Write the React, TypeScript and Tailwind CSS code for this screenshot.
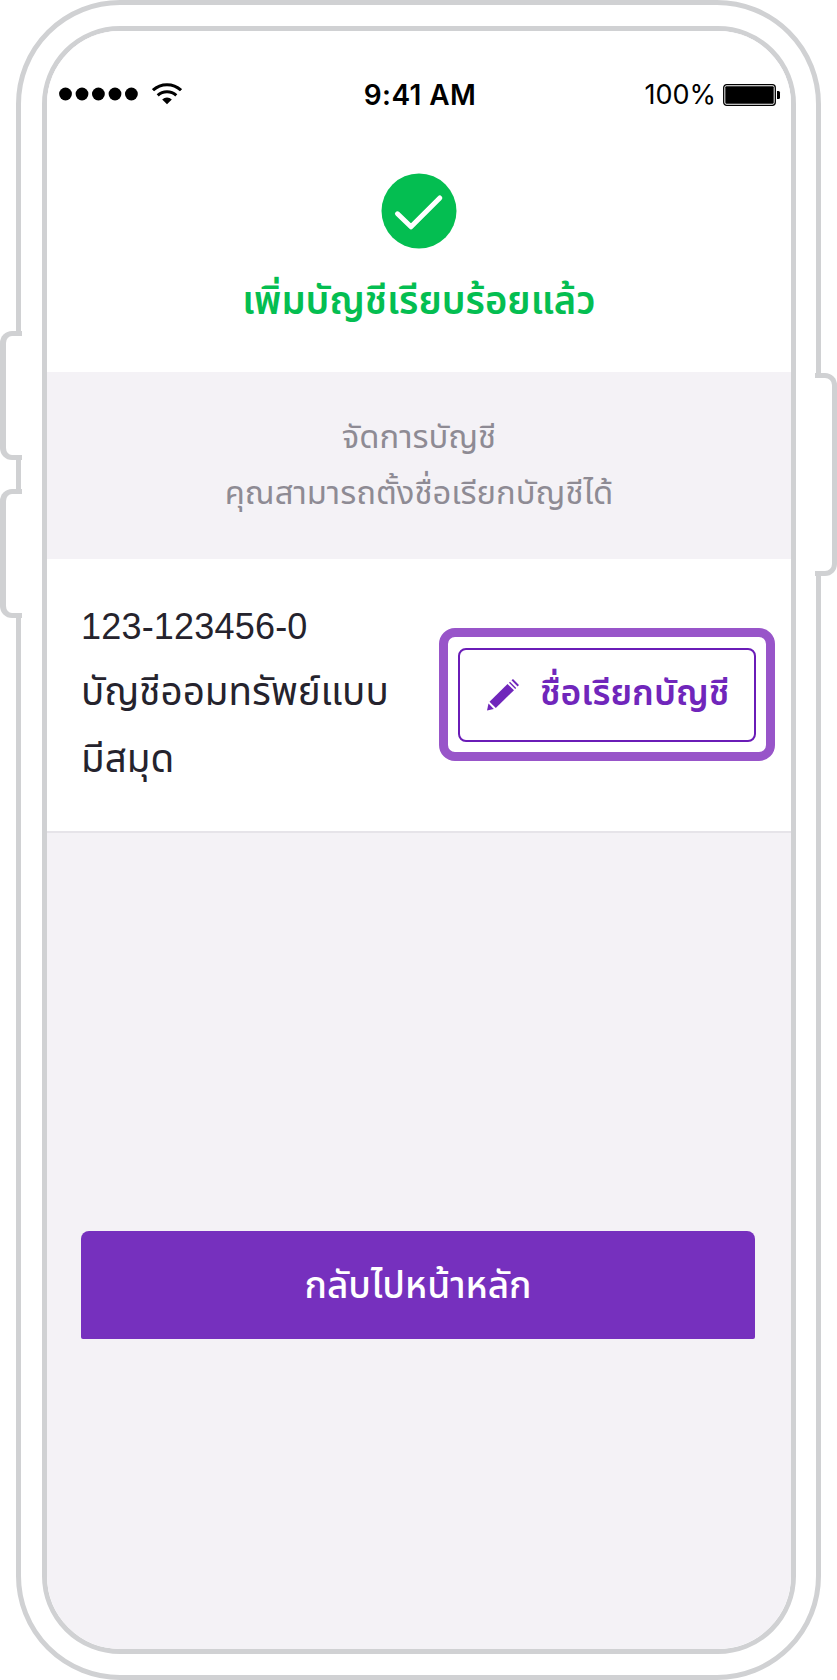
const thai = "font-['Noto_Sans_Thai','Liberation_Sans',sans-serif] whitespace-nowrap";

function StatusBar() {
  return (
    <div className="flex h-[126px] items-center justify-between pl-3 pr-[10px] font-['Inter',sans-serif] text-black">
      <div className="flex w-[260px] items-center gap-[14px]">
        <svg className="h-[14px] w-[79px]" viewBox="0 0 79 14">
          <circle cx="6.5" cy="7" r="6.4" />
          <circle cx="23" cy="7" r="6.4" />
          <circle cx="39.4" cy="7" r="6.4" />
          <circle cx="56" cy="7" r="6.4" />
          <circle cx="72.4" cy="7" r="6.4" />
        </svg>
        <svg className="h-[22px] w-[30px]" viewBox="0 0 30 22" fill="none" stroke="black" strokeWidth="3">
          <path d="M1 7.2a20.5 20.5 0 0 1 28 0" />
          <path d="M5.7 12.4a13.8 13.8 0 0 1 18.6 0" />
          <path d="M10.2 16.4a7 7 0 0 1 9.6 0L15 21.3z" fill="black" stroke="none" />
        </svg>
      </div>
      <div className="pt-[2px] text-[28px] leading-8 font-semibold tracking-[0.4px]">9:41 AM</div>
      <div className="flex w-[260px] items-center justify-end gap-[7px] pt-px">
        <span className="text-[27px] leading-8">100%</span>
        <svg className="h-[22px] w-[58px]" viewBox="0 0 58 22">
          <rect x="0.7" y="0.7" width="51.6" height="20.6" rx="3" fill="none" stroke="black" strokeWidth="1.3" />
          <rect x="2.3" y="2.3" width="48.4" height="17.4" rx="1" />
          <path d="M54 7h1.5a1.5 1.5 0 0 1 1.5 1.5v5a1.5 1.5 0 0 1-1.5 1.5H54z" />
        </svg>
      </div>
    </div>
  );
}

function Screen() {
  return (
    <div className="flex h-full flex-col overflow-hidden rounded-[73px] bg-[#f4f2f6]">
      <div className="h-[341px] bg-white">
        <StatusBar />
        <div className="flex flex-col items-center pt-4">
          <svg className="h-[76px] w-[76px]" viewBox="0 0 76 76">
            <circle cx="38" cy="38" r="37.5" fill="#04be51" />
            <path d="M16.5 40.8 30 53.8 58.8 25" fill="none" stroke="white" strokeWidth="5" strokeLinecap="round" strokeLinejoin="round" />
          </svg>
          <h1 className={`${thai} pt-[23px] text-[38.2px] leading-[60px] font-semibold text-[#04be51]`}>
            <span>เพิ่มบัญชีเรียบร้อยแล้ว</span>
          </h1>
        </div>
      </div>
      <div className={`${thai} h-[187px] pt-[38px] text-center text-[32.8px] leading-[56px] text-[#8e8b94]`}>
        <p>จัดการบัญชี</p>
        <p>คุณสามารถตั้งชื่อเรียกบัญชีได้</p>
      </div>
      <div className="flex h-[274px] justify-between border-b-2 border-[#e6e4e9] bg-white pr-4 pl-[34px]">
        <div className={`${thai} pt-[34px] text-[38.6px] leading-[67px] text-[#25232d]`}>
          <p className="font-['Liberation_Sans',sans-serif] text-[36px] tracking-[0.2px]">123-123456-0</p>
          <p>บัญชีออมทรัพย์แบบ</p>
          <p>มีสมุด</p>
        </div>
        <div className="mt-[69px] h-[133px] w-[336px] rounded-2xl border-[9px] border-[#9855c9] p-[10px] pt-[11px]">
          <button className="flex h-full w-full items-center rounded-lg border-2 border-[#6a1cb7] pl-[27px] text-[#7026bb]">
            <svg className="h-8 w-8" viewBox="0 0 32 32" fill="currentColor">
              <path d="M0 31.5 1.5 24.5 6.8 30z" />
              <path d="M2.5 22.7 20.5 5 27 11.2 8.8 29z" />
              <path d="M22 3.8 28.2 10 29.2 9 23 2.8zM24.5 1.3 26 0 32 6 30.6 7.6z" />
            </svg>
            <span className={`${thai} ml-[21px] text-[35.4px] font-semibold`}>ชื่อเรียกบัญชี</span>
          </button>
        </div>
      </div>
      <div className="pr-[36px] pl-[34px] pt-[398px]">
        <button className={`${thai} h-[108px] w-full rounded-t-lg rounded-b-xs bg-[#7630be] pt-[6px] text-[37px] font-medium text-white`}>
          <span>กลับไปหน้าหลัก</span>
        </button>
      </div>
    </div>
  );
}

export default function App() {
  return (
    <div className="relative h-[1680px] w-[837px] bg-white px-4">
      <div className="h-full rounded-[104px] border-5 border-[#d0d1d3] py-[21px] pr-5 pl-[21px]">
        <div className="h-full rounded-[78px] border-5 border-[#d0d1d3]">
          <Screen />
        </div>
      </div>
      <div className="absolute top-[331px] left-0 h-[129px] w-[22px] rounded-l-xl border-y-5 border-l-6 border-[#d0d1d3] bg-white" />
      <div className="absolute top-[489px] left-0 h-[129px] w-[22px] rounded-l-xl border-y-5 border-l-6 border-[#d0d1d3] bg-white" />
      <div className="absolute top-[373px] right-0 h-[203px] w-[22px] rounded-r-xl border-y-5 border-r-5 border-[#d0d1d3] bg-white" />
    </div>
  );
}
